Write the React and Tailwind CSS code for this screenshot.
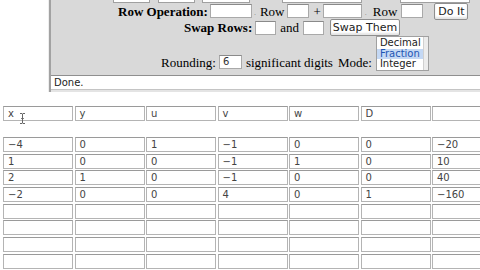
import React from "react";

const serif = { fontFamily: '"Liberation Serif", "Times New Roman", serif' };
const sans = { fontFamily: '"DejaVu Sans", Verdana, sans-serif' };

function Box({ w, children, className = "" }) {
  return (
    <div
      className={`h-[14px] bg-white border border-[#a9a9a9] border-t-[#8a8a8a] text-[10px] leading-[12px] text-[#333] pl-[3px] overflow-hidden ${className}`}
      style={{ ...sans, width: w }}
    >
      {children}
    </div>
  );
}

function Btn({ children, w }) {
  return (
    <div
      className="h-[17px] bg-white border border-[#8e8e8e] rounded-[2px] text-[11px] leading-[15px] text-[#222] text-center shadow-[inset_0_-2px_2px_#e4e4e4]"
      style={{ ...sans, width: w }}
    >
      {children}
    </div>
  );
}

const header = ["x", "y", "u", "v", "w", "D", ""];
const data = [
  ["\u22124", "0", "1", "\u22121", "0", "0", "\u221220"],
  ["1", "0", "0", "\u22121", "1", "0", "10"],
  ["2", "1", "0", "\u22121", "0", "0", "40"],
  ["\u22122", "0", "0", "4", "0", "1", "\u2212160"],
  ["", "", "", "", "", "", ""],
  ["", "", "", "", "", "", ""],
  ["", "", "", "", "", "", ""],
  ["", "", "", "", "", "", ""],
];

function Cell({ v }) {
  return (
    <div
      className="h-[15px] bg-white border border-[#b4b4b4] border-t-[#9a9a9a] text-[10px] leading-[13px] text-[#444] pl-[4px] overflow-hidden whitespace-nowrap"
      style={sans}
    >
      {v}
    </div>
  );
}

export default function App() {
  return (
    <div className="w-[480px] h-[270px] overflow-hidden bg-white relative">
      {/* control panel */}
      <div className="ml-[48px] w-[432px] border-l border-[#eeeeee]">
        <div className="border-l-2 border-[#a2a2a2] bg-[#d9d9d9]">
          {/* cut-off row above */}
          <div className="h-[3px] flex items-end overflow-hidden">
            <div className="ml-[62px] w-[37px] h-[3px] bg-white border-x border-b border-[#a0a0a0]" />
            <div className="ml-[8px] w-[37px] h-[3px] bg-white border-x border-b border-[#a0a0a0]" />
            <div className="ml-[7px] w-[48px] h-[3px] bg-white border-x border-b border-[#a0a0a0]" />
            <div className="ml-[32px] w-[80px] h-[3px] bg-white border-x border-b border-[#a0a0a0]" />
            <div className="ml-[38px] w-[70px] h-[3px] bg-white border-x border-b border-[#a0a0a0]" />
          </div>

          {/* Row Operation */}
          <div className="h-[16px] flex items-center pl-[67px] text-[13px] text-black" style={serif}>
            <span className="font-bold leading-none">Row Operation:</span>
            <Box w={42} className="ml-[2px]" />
            <span className="ml-[2px] text-[8px] text-[#888] self-end">.</span>
            <span className="ml-[4px] leading-none">Row</span>
            <Box w={22} className="ml-[3px]" />
            <span className="ml-[4px] leading-none">+</span>
            <Box w={39} className="ml-[2px]" />
            <span className="ml-[3px] text-[8px] text-[#888] self-end">.</span>
            <span className="ml-[6px] leading-none">Row</span>
            <Box w={22} className="ml-[4px]" />
            <div className="ml-[11px]">
              <Btn w={34}>Do It</Btn>
            </div>
          </div>

          {/* Swap Rows */}
          <div className="h-[17px] flex items-center pl-[133px] text-[13px] text-black" style={serif}>
            <span className="font-bold leading-none">Swap Rows:</span>
            <Box w={21} className="ml-[3px]" />
            <span className="ml-[4px] leading-none">and</span>
            <Box w={21} className="ml-[4px]" />
            <div className="ml-[6px]">
              <Btn w={70}>Swap Them</Btn>
            </div>
          </div>

          {/* Rounding / Mode */}
          <div className="h-[36px] flex items-end pb-[2px] pl-[110px] text-[13px] text-black" style={serif}>
            <span className="leading-[15px]">Rounding:</span>
            <Box w={23} className="ml-[3px] mb-[1px]">6</Box>
            <span className="ml-[4px] leading-[15px]">significant digits</span>
            <span className="ml-[5px] leading-[15px]">Mode:</span>
            <div className="ml-[4px] mb-[-1px] w-[53px] h-[35px] bg-white border border-[#a0a0a0] flex" style={sans}>
              <div className="flex-1 text-[10px] leading-[10.5px] pt-[1px] text-[#222]">
                <div className="pl-[3px]">Decimal</div>
                <div className="pl-[3px] bg-[#c4d8f4] text-[#1e55b3]">Fraction</div>
                <div className="pl-[3px]">Integer</div>
              </div>
              <div className="w-[5px] bg-[#ececec] border-l border-[#d0d0d0]" />
            </div>
          </div>

          <div className="h-[3px]" />

          {/* status */}
          <div className="h-[15px] bg-white border-t border-[#8f8f8f] border-b border-b-[#c4c4c4] text-[10px] leading-[14px] text-[#222] pl-[3px]" style={sans}>
            Done.
          </div>
          <div className="h-[2px] bg-[#e4e4e4]" />
        </div>
      </div>

      {/* table */}
      <div className="pt-[14px] pl-[3px]">
        <div className="grid grid-cols-[repeat(7,70px)] gap-x-[1.5px]">
          {header.map((v, i) => (
            <Cell key={i} v={v} />
          ))}
        </div>
        <div className="h-[16px]" />
        <div className="grid grid-cols-[repeat(7,70px)] gap-x-[1.5px] gap-y-[1.67px]">
          {data.flat().map((v, i) => (
            <Cell key={i} v={v} />
          ))}
        </div>
      </div>

      {/* text cursor */}
      <svg className="absolute left-[19px] top-[113px]" width="7" height="11" viewBox="0 0 7 11">
        <path d="M1 0.5h2l0.5 0.5 0.5-0.5h2M3.5 1v9M1 10.5h2l0.5-0.5 0.5 0.5h2M2.2 5.5h2.6" stroke="#666" strokeWidth="1" fill="none" />
      </svg>
    </div>
  );
}
